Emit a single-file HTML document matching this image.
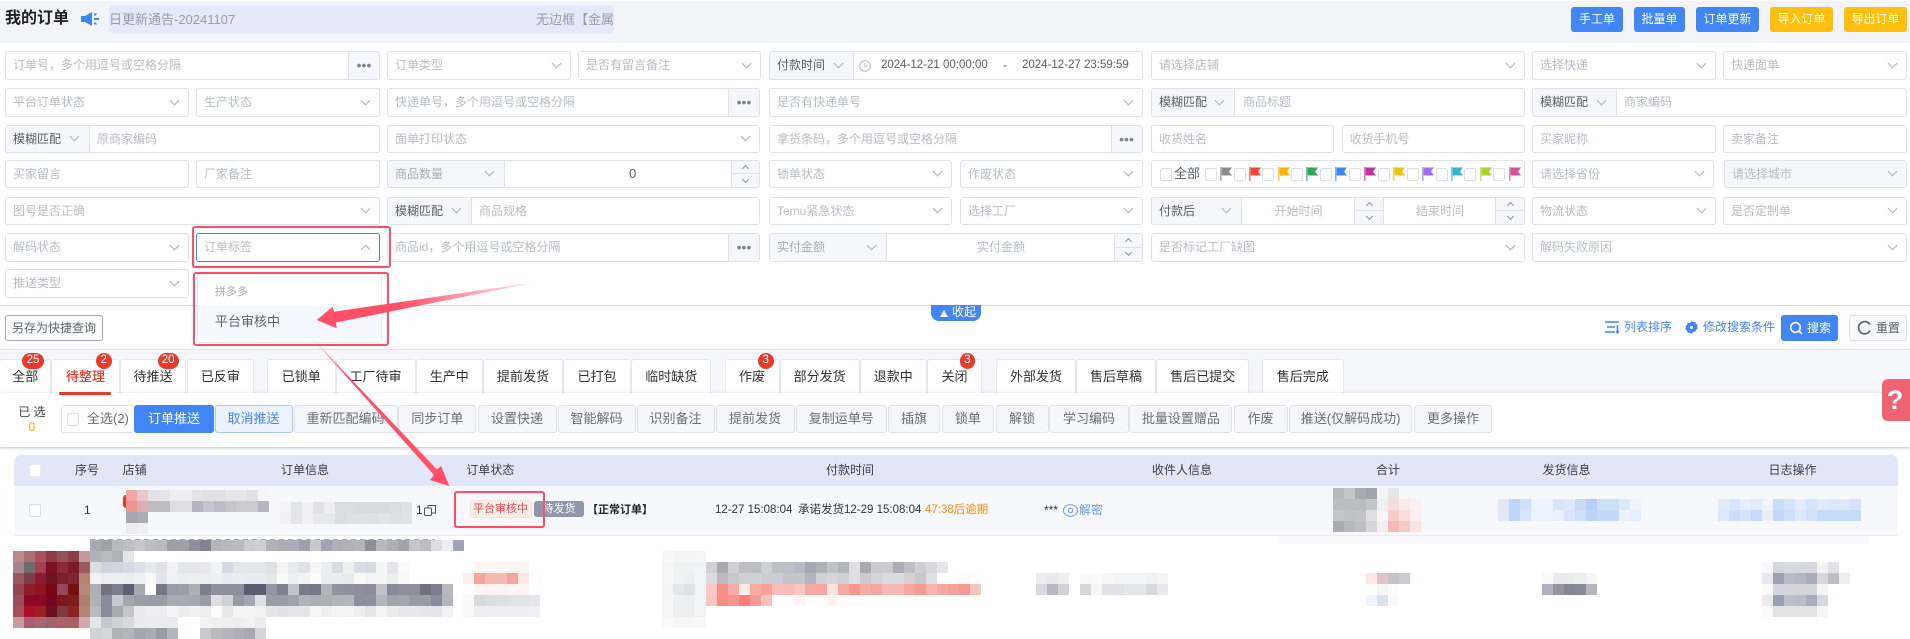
<!DOCTYPE html>
<html lang="zh-CN"><head><meta charset="utf-8"><title>我的订单</title>
<style>
*{box-sizing:border-box}
html,body{margin:0;padding:0;background:#fff}
body{position:relative;width:1910px;height:639px;overflow:hidden;font:12px/1.2 "Liberation Sans","Noto Sans CJK SC",sans-serif;color:#606266}
.a{position:absolute}
.btn{position:absolute;top:7px;height:25px;border-radius:3px;color:#fff;background:#4285f4;display:flex;align-items:center;justify-content:center;font-size:12px}
.y{background:#ffbf0a}
.f{position:absolute;border:1px solid #dfe2e8;border-radius:3px;background:#fff;color:#b9bcc3;padding-left:7px;display:flex;align-items:center;white-space:nowrap;overflow:hidden}
.r1{top:51px;height:29px}.r2{top:88px;height:29px}.r3{top:125px;height:28px}.r4{top:160px;height:28px}.r5{top:197px;height:28px}.r6{top:233px;height:29px}.r7{top:269px;height:29px}
.c0{left:5px;width:183.5px}.c1{left:196px;width:184px}.c2{left:387px;width:183.5px}.c3{left:578px;width:182.5px}.c4{left:769px;width:183px}.c5{left:960px;width:182.5px}.c6{left:1151px;width:182.5px}.c7{left:1341.5px;width:183.5px}.c8{left:1532px;width:183.5px}.c9{left:1723px;width:184px}
.d0{left:5px;width:375px}.d2{left:387px;width:373px}.d4{left:769px;width:373.5px}.d6{left:1151px;width:374px}.d8{left:1532px;width:375px}
.v,.u{position:absolute;width:7px;height:7px;right:10px;top:50%;margin-top:-6px;transform:rotate(45deg);border-right:1px solid #aeb1b8;border-bottom:1px solid #aeb1b8}
.u{transform:rotate(225deg);margin-top:-2px}
.dots{position:absolute;right:0;top:0;bottom:0;width:31px;background:#f5f7fc;border-left:1px solid #dfe2e8;color:#80838c;font-size:14px;display:flex;align-items:center;justify-content:center;letter-spacing:0}
.pre{position:absolute;left:0;top:0;bottom:0;background:#f5f7fa;border-right:1px solid #dfe2e8;padding-left:7px;display:flex;align-items:center}
.dk{color:#5a5d64}
.lt{color:#a9acb4}
.st{position:absolute;right:0;top:0;bottom:0;width:28px;background:#f5f7fa;border-left:1px solid #dfe2e8}
.st em{position:absolute;left:0;right:0;height:50%;display:block}
.st em:first-child{top:0;border-bottom:1px solid #dfe2e8}
.st em:last-child{bottom:0}
.st .v,.st .u{width:5px;height:5px;right:11px;border-color:#8d9097}
.st .u{margin-top:-1px}.st .v{margin-top:-4px}
.cen{position:absolute;display:flex;align-items:center;justify-content:center;top:0;bottom:0}
.cb{position:absolute;width:12px;height:13px;border:1px solid #dcdfe6;border-radius:2px;background:#fff}
.fl{position:absolute;top:167px;width:12px;height:14px}
.tab{position:absolute;top:359px;height:34px;padding-top:1px;background:#fff;border:1px solid #e6e8ee;border-bottom:0;border-radius:3px 3px 0 0;color:#303133;font-size:13px;display:flex;align-items:center;justify-content:center;white-space:nowrap}
.bd{position:absolute;top:353px;height:16px;background:#e8392d;color:#fff;border-radius:8px;font-size:11.5px;display:flex;align-items:center;justify-content:center;z-index:3}
.tb{position:absolute;top:405px;height:28px;background:#f6f7fa;border:1px solid #dfe2e8;border-radius:3px;color:#6a6d74;font-size:13px;display:flex;align-items:center;justify-content:center;white-space:nowrap}
.th{position:absolute;top:462px;color:#3a3d46;font-size:12px;line-height:16px;white-space:nowrap;transform:translateX(-50%)}
.td{position:absolute;top:503px;line-height:15px;color:#333;white-space:nowrap;font-size:12px}
.m{position:absolute;display:flex;height:11px}
.m b{flex:0 0 11px;height:11px;display:block}
.rb{position:absolute;border:2px solid #fb4f68;border-radius:3px;z-index:8}
</style></head><body>

<!-- header -->
<div class="a" style="left:0;top:1px;width:1910px;height:42px;background:#f3f4f8"></div>
<div class="a" style="left:5px;top:8px;font-size:16px;font-weight:700;color:#222;line-height:22px">我的订单</div>
<svg class="a" style="left:81px;top:12px" width="19" height="14" viewBox="0 0 19 14"><path fill="#4285f4" d="M0 4h4l7-4v14l-7-4H0z"/><path fill="#4285f4" d="M13 1.5h3l-1 2h-2zM13 6h5v2h-5zM13 10.500h2l1 2h-3z"/></svg>
<div class="a" style="left:109px;top:5px;width:505px;height:29px;background:#e4eaf8;border-radius:5px;overflow:hidden;white-space:nowrap;color:#9a9da5;font-size:13px;line-height:29px"><span class="a" style="left:0">日更新通告-20241107</span><span class="a" style="left:427px">无边框【金属配件】</span></div>
<div class="btn" style="left:1571px;width:52px">手工单</div>
<div class="btn" style="left:1634px;width:51px">批量单</div>
<div class="btn" style="left:1696px;width:63px">订单更新</div>
<div class="btn y" style="left:1770px;width:63px">导入订单</div>
<div class="btn y" style="left:1844px;width:63px">导出订单</div>

<!-- row 1 -->
<div class="f r1 d0">订单号，多个用逗号或空格分隔<span class="dots">•••</span></div>
<div class="f r1 c2">订单类型<i class="v"></i></div>
<div class="f r1 c3">是否有留言备注<i class="v"></i></div>
<div class="f r1 d4"><span class="pre dk" style="width:84px">付款时间<i class="v" style="right:11px"></i></span>
<svg class="a" style="left:89px;top:8px" width="12" height="12" viewBox="0 0 12 12" fill="none" stroke="#b5b8bf"><circle cx="6" cy="6" r="5.300"/><path d="M6 3v3.300h2.500"/></svg>
<span class="a" style="left:111px;color:#5a5d64;font-size:11.5px">2024-12-21 00:00:00</span><span class="a" style="left:233px;color:#5a5d64">-</span><span class="a" style="left:252px;color:#5a5d64;font-size:11.5px">2024-12-27 23:59:59</span></div>
<div class="f r1 d6">请选择店铺<i class="v"></i></div>
<div class="f r1 c8">选择快递<i class="v"></i></div>
<div class="f r1 c9">快递面单<i class="v"></i></div>

<!-- row 2 -->
<div class="f r2 c0">平台订单状态<i class="v"></i></div>
<div class="f r2 c1">生产状态<i class="v"></i></div>
<div class="f r2 d2">快递单号，多个用逗号或空格分隔<span class="dots">•••</span></div>
<div class="f r2 d4">是否有快递单号<i class="v"></i></div>
<div class="f r2 d6" style="padding-left:91px"><span class="pre dk" style="width:83px">模糊匹配<i class="v" style="right:11px"></i></span>商品标题</div>
<div class="f r2 d8" style="padding-left:91px"><span class="pre dk" style="width:84px">模糊匹配<i class="v" style="right:11px"></i></span>商家编码</div>

<!-- row 3 -->
<div class="f r3 d0" style="padding-left:91px"><span class="pre dk" style="width:84px">模糊匹配<i class="v" style="right:11px"></i></span>原商家编码</div>
<div class="f r3 d2">面单打印状态<i class="v"></i></div>
<div class="f r3 d4">拿货条码，多个用逗号或空格分隔<span class="dots">•••</span></div>
<div class="f r3 c6">收货姓名</div>
<div class="f r3 c7">收货手机号</div>
<div class="f r3 c8">买家昵称</div>
<div class="f r3 c9">卖家备注</div>

<!-- row 4 -->
<div class="f r4 c0">买家留言</div>
<div class="f r4 c1">厂家备注</div>
<div class="f r4 d2"><span class="pre lt" style="width:117px">商品数量<i class="v" style="right:11px"></i></span><span class="a dk" style="left:241px;font-size:13px">0</span><span class="st"><em><i class="u"></i></em><em><i class="v"></i></em></span></div>
<div class="f r4 c4">锁单状态<i class="v"></i></div>
<div class="f r4 c5">作废状态<i class="v"></i></div>
<div class="f r4 d6"></div>
<div class="f r4 c8" style="width:182px">请选择省份<i class="v"></i></div>
<div class="f r4 c9" style="left:1724px;width:183px;background:#f5f7fc">请选择城市<i class="v"></i></div>
<svg width="0" height="0" style="position:absolute"><symbol id="flag" viewBox="0 0 12 14"><path fill="currentColor" opacity=".65" d="M0 0h1.600v14H0z"/><path fill="currentColor" d="M1.600 .5H12L9 4.500l3 4H1.600z"/></symbol></svg>
<i class="cb" style="left:1160px;top:168px"></i><span class="a" style="left:1174px;top:166px;font-size:13px;line-height:16px;color:#5a5d64">全部</span>
<i class="cb" style="left:1204.500px;top:168px"></i><svg class="fl" style="left:1220px;color:#8c8c8c"><use href="#flag"/></svg>
<i class="cb" style="left:1233.500px;top:168px"></i><svg class="fl" style="left:1249px;color:#f44336"><use href="#flag"/></svg>
<i class="cb" style="left:1262px;top:168px"></i><svg class="fl" style="left:1277.500px;color:#ffb300"><use href="#flag"/></svg>
<i class="cb" style="left:1291px;top:168px"></i><svg class="fl" style="left:1306px;color:#2ea55a"><use href="#flag"/></svg>
<i class="cb" style="left:1320px;top:168px"></i><svg class="fl" style="left:1335px;color:#3f87f5"><use href="#flag"/></svg>
<i class="cb" style="left:1348.500px;top:168px"></i><svg class="fl" style="left:1364px;color:#c530a8"><use href="#flag"/></svg>
<i class="cb" style="left:1377.500px;top:168px"></i><svg class="fl" style="left:1393px;color:#f0c014"><use href="#flag"/></svg>
<i class="cb" style="left:1406.500px;top:168px"></i><svg class="fl" style="left:1422px;color:#9c6ff0"><use href="#flag"/></svg>
<i class="cb" style="left:1435.500px;top:168px"></i><svg class="fl" style="left:1451px;color:#35b5c8"><use href="#flag"/></svg>
<i class="cb" style="left:1464px;top:168px"></i><svg class="fl" style="left:1479.500px;color:#aad32b"><use href="#flag"/></svg>
<i class="cb" style="left:1493px;top:168px"></i><svg class="fl" style="left:1508.500px;color:#d9509a"><use href="#flag"/></svg>

<!-- row 5 -->
<div class="f r5 d0">图号是否正确<i class="v"></i></div>
<div class="f r5 d2" style="padding-left:91px"><span class="pre dk" style="width:84px">模糊匹配<i class="v" style="right:11px"></i></span>商品规格</div>
<div class="f r5 c4">Temu紧急状态<i class="v"></i></div>
<div class="f r5 c5">选择工厂<i class="v"></i></div>
<div class="f r5 d6"><span class="pre dk" style="width:90px">付款后<i class="v" style="right:11px"></i></span>
<span class="cen" style="left:90px;width:113px">开始时间</span><span class="st" style="left:202px;right:auto;width:29px"><em><i class="u"></i></em><em><i class="v"></i></em></span>
<span class="cen" style="left:231px;width:113px;border-left:1px solid #dfe2e8">结束时间</span><span class="st" style="width:29px"><em><i class="u"></i></em><em><i class="v"></i></em></span></div>
<div class="f r5 c8">物流状态<i class="v"></i></div>
<div class="f r5 c9">是否定制单<i class="v"></i></div>

<!-- row 6 -->
<div class="f r6 c0">解码状态<i class="v"></i></div>
<div class="f r6 c1" style="border-color:#4285f4">订单标签<i class="u"></i></div>
<div class="f r6 d2">商品id，多个用逗号或空格分隔<span class="dots">•••</span></div>
<div class="f r6 d4"><span class="pre lt" style="width:117px">实付金额<i class="v" style="right:11px"></i></span><span class="cen" style="left:117px;width:228px">实付金额</span><span class="st"><em><i class="u"></i></em><em><i class="v"></i></em></span></div>
<div class="f r6 d6">是否标记工厂缺图<i class="v"></i></div>
<div class="f r6 d8">解码失败原因<i class="v"></i></div>

<!-- row 7 -->
<div class="f r7 c0">推送类型<i class="v"></i></div>

<!-- divider -->
<div class="a" style="left:0;top:305px;width:1910px;height:1px;background:#dcdcdf"></div>
<div class="a" style="left:931px;top:305px;width:50px;height:16px;background:#4285f4;border-radius:0 0 8px 8px;color:#fff;font-size:12px;line-height:15px;white-space:nowrap"><span class="a" style="left:9px;top:5px;width:0;height:0;border:4px solid transparent;border-top:0;border-bottom:7px solid #fff"></span><span class="a" style="left:21px;top:0">收起</span></div>

<!-- action row -->
<div class="a" style="left:5px;top:315px;width:98px;height:26px;border:1px solid #a2a7b2;border-radius:3px;background:#fafbfc;color:#666;display:flex;align-items:center;justify-content:center;white-space:nowrap">另存为快捷查询</div>
<svg class="a" style="left:1605px;top:321px" width="15" height="13" viewBox="0 0 15 13" fill="none" stroke="#4285f4" stroke-width="1.500"><path d="M0 1h14M2 6h8M0 11h10M12.500 4v8"/><path d="M11 10l1.500 2.500L14 10" stroke-width="1"/></svg>
<span class="a" style="left:1624px;top:319px;color:#4a86ef;line-height:16px">列表排序</span>
<svg class="a" style="left:1685px;top:321px" width="13" height="13" viewBox="0 0 13 13"><path fill="#4285f4" fill-rule="evenodd" d="M6.500 0l1.700 1.100 2.100-.2.600 2 1.800 1-.6 2 .7 1.700-1.800 1.200-.6 2-2.100-.1L6.500 13l-1.700-1.300-2.100.1-.6-2L.4 8.600l.6-2-.6-1.700 1.800-1 .6-2 2.100.2zM6.500 5a1.500 1.500 0 100 3 1.500 1.500 0 000-3z"/></svg>
<span class="a" style="left:1703px;top:319px;color:#4a86ef;line-height:16px">修改搜索条件</span>
<div class="a" style="left:1781px;top:315px;width:57px;height:26px;background:#4285f4;border-radius:3px;color:#fff;line-height:26px"><svg class="a" style="left:8px;top:6px" width="14" height="14" viewBox="0 0 14 14" fill="none" stroke="#fff" stroke-width="1.600"><circle cx="6.500" cy="6.500" r="4.800"/><path d="M10 10l3 3"/></svg><span class="a" style="left:26px">搜索</span></div>
<div class="a" style="left:1849px;top:315px;width:58px;height:26px;background:#f8f9fb;border:1px solid #dfe2e8;border-radius:3px;color:#5a5d64;line-height:24px"><svg class="a" style="left:7px;top:4px" width="15" height="15" viewBox="0 0 15 15" fill="none" stroke="#666" stroke-width="1.700"><path d="M13 4.500A6 6 0 102.500 11 6 6 0 0013 10.500"/></svg><span class="a" style="left:26px">重置</span></div>

<!-- tabs band -->
<div class="a" style="left:0;top:349px;width:1910px;height:44px;background:#f5f6fa;border-top:1px solid #e4e6ec;box-shadow:0 -1px 2px rgba(0,0,0,.04)"></div>
<div class="tab" style="left:-1px;width:52.400px">全部</div>
<div class="tab" style="left:51.400px;width:68.200px;color:#e8392d;font-weight:500">待整理</div>
<div class="a" style="left:59px;top:392px;width:52.400px;height:3px;background:#e8392d;z-index:2;border-radius:1px"></div>
<div class="tab" style="left:119.600px;width:66.900px">待推送</div>
<div class="tab" style="left:186.500px;width:67.800px">已反审</div>
<div class="tab" style="left:267px;width:68.500px">已锁单</div>
<div class="tab" style="left:335.500px;width:80px">工厂待审</div>
<div class="tab" style="left:415.500px;width:67.500px">生产中</div>
<div class="tab" style="left:483px;width:80px">提前发货</div>
<div class="tab" style="left:563px;width:68px">已打包</div>
<div class="tab" style="left:631px;width:80.400px">临时缺货</div>
<div class="tab" style="left:724.500px;width:55.100px">作废</div>
<div class="tab" style="left:779.600px;width:80px">部分发货</div>
<div class="tab" style="left:859.600px;width:67.400px">退款中</div>
<div class="tab" style="left:927px;width:55px">关闭</div>
<div class="tab" style="left:996px;width:80px">外部发货</div>
<div class="tab" style="left:1076px;width:80px">售后草稿</div>
<div class="tab" style="left:1156px;width:93.400px">售后已提交</div>
<div class="tab" style="left:1262px;width:81.500px">售后完成</div>
<div class="bd" style="left:22.400px;width:21.300px">25</div>
<div class="bd" style="left:96px;width:15.500px">2</div>
<div class="bd" style="left:157.500px;width:21.300px">20</div>
<div class="bd" style="left:758px;width:15.500px">3</div>
<div class="bd" style="left:959.600px;width:15.500px">3</div>

<!-- toolbar -->
<div class="a" style="left:0;top:393px;width:1910px;height:54px;background:#fff;box-shadow:0 1px 3px rgba(40,45,70,.3)"></div>
<div class="a" style="left:0;top:404px;width:64px;text-align:center;line-height:16px;color:#444">已 选</div>
<div class="a" style="left:0;top:419px;width:64px;text-align:center;line-height:16px;color:#f5a623">0</div>
<div class="tb" style="left:61px;width:74px;background:#fff;justify-content:flex-start;padding-left:25px">全选(2)</div>
<i class="cb" style="left:67px;top:413px"></i>
<div class="tb" style="left:134px;width:80px;background:#4285f4;color:#fff;border-color:#4285f4">订单推送</div>
<div class="tb" style="left:214.500px;width:78px;background:#ecf3ff;color:#4285f4;border-color:#a8c8fb">取消推送</div>
<div class="tb" style="left:293.500px;width:104px">重新匹配编码</div>
<div class="tb" style="left:398.400px;width:78px">同步订单</div>
<div class="tb" style="left:477.500px;width:79px">设置快递</div>
<div class="tb" style="left:557.500px;width:78px">智能解码</div>
<div class="tb" style="left:636.500px;width:78px">识别备注</div>
<div class="tb" style="left:715.500px;width:79px">提前发货</div>
<div class="tb" style="left:795.500px;width:91.500px">复制运单号</div>
<div class="tb" style="left:887.800px;width:52.600px">插旗</div>
<div class="tb" style="left:941.600px;width:52.700px">锁单</div>
<div class="tb" style="left:995.500px;width:53px">解锁</div>
<div class="tb" style="left:1049.400px;width:79.200px">学习编码</div>
<div class="tb" style="left:1129.400px;width:103px">批量设置赠品</div>
<div class="tb" style="left:1233.500px;width:54px">作废</div>
<div class="tb" style="left:1288.800px;width:123.600px">推送(仅解码成功)</div>
<div class="tb" style="left:1413.700px;width:78.700px">更多操作</div>
<div class="a" style="left:1882px;top:379px;width:28px;height:42px;background:#f06375;border-radius:6px 0 0 6px;color:#fff;font-size:27px;font-weight:700;line-height:42px;text-align:center;padding-right:2px">?</div>

<!-- table -->
<div class="a" style="left:14px;top:455px;width:1884px;height:31px;background:#e1e7f6;border-radius:7px 7px 0 0"></div>
<div class="a" style="left:14px;top:486px;width:1884px;height:50px;background:#f7f8fb;border-bottom:1px solid #eaecf2"></div>
<i class="cb" style="left:28.500px;top:464px;border-color:#e8eaf0"></i>
<span class="th" style="left:87px">序号</span><span class="th" style="left:134.700px">店铺</span><span class="th" style="left:305px">订单信息</span><span class="th" style="left:490.300px">订单状态</span><span class="th" style="left:850px">付款时间</span><span class="th" style="left:1182px">收件人信息</span><span class="th" style="left:1388px">合计</span><span class="th" style="left:1566.500px">发货信息</span><span class="th" style="left:1792.500px">日志操作</span>
<i class="cb" style="left:28.500px;top:504px"></i>
<span class="td" style="left:84px">1</span>
<div class="a" style="left:123px;top:495px;width:8px;height:13px;background:#e8392d;border-radius:3px 0 0 3px"></div>
<span class="td" style="left:416px">1</span>
<svg class="a" style="left:424px;top:505px" width="12" height="11" viewBox="0 0 12 11" fill="none" stroke="#555"><rect x=".5" y="3" width="7" height="7.500" rx="1"/><path d="M4 3V.5h7.500V8H8"/></svg>
<div class="a" style="left:469.500px;top:500px;width:62px;height:18px;background:#ffecec;border:1px solid #fdd;border-radius:3px;color:#f2453d;font-size:11px;line-height:16px;text-align:center;white-space:nowrap">平台审核中</div>
<div class="a" style="left:534px;top:501px;width:50px;height:16px;background:#8f96a8;border-radius:3px;color:#fff;font-size:11px;line-height:16px;text-align:center">待发货</div>
<span class="td" style="left:587px;font-weight:700;color:#222;font-size:11px">【正常订单】</span>
<span class="td" style="left:715px;font-size:11.500px">12-27 15:08:04</span>
<span class="td" style="left:798px;font-size:11.500px">承诺发货12-29 15:08:04</span>
<span class="td" style="left:925px;color:#fa8c16;font-size:11.500px">47:38后逾期</span>
<span class="td" style="left:1044px">***</span>
<svg class="a" style="left:1063px;top:504px" width="15" height="13" viewBox="0 0 15 13" fill="none" stroke="#5b9bff"><ellipse cx="7.500" cy="6.500" rx="7" ry="5.800"/><circle cx="7.500" cy="6.500" r="2.200"/></svg>
<span class="td" style="left:1079px;color:#5b9bff">解密</span>

<!-- row mosaics -->
<div class="m" style="left:126px;top:490px"><b style="background:#f4a6a2"></b><b style="background:#e8c7c8"></b><b style="background:#e3e3e8"></b><b style="background:#e5e5ea"></b><b style="background:#eeeef2"></b><b style="background:#eeeef2"></b><b style="background:#e4e4e9"></b><b style="background:#e0e0e5"></b><b style="background:#e0e0e5"></b><b style="background:#e5e5ea"></b><b style="background:#e5e5ea"></b><b style="background:#e0e0e5"></b><b style="background:#f6f6f8"></b></div>
<div class="m" style="left:126px;top:501px"><b style="background:#f19390"></b><b style="background:#dfaeb0"></b><b style="background:#bcbdc5"></b><b style="background:#bcbdc5"></b><b style="background:#dddde2"></b><b style="background:#dddde2"></b><b style="background:#b4b5bf"></b><b style="background:#c3c4cc"></b><b style="background:#bbbcc5"></b><b style="background:#c3c4cc"></b><b style="background:#cbccd2"></b><b style="background:#cbccd2"></b><b style="background:#b5b6bf"></b></div>
<div class="m" style="left:126px;top:512px"><b style="background:#a6a8b0"></b><b style="background:#abacb4"></b></div>
<div class="m" style="left:126px;top:523px"><b style="background:#ecedef"></b><b style="background:#eef0f2"></b></div>
<div class="m" style="left:280px;top:502px"><b style="background:#f3f3f6"></b><b style="background:#e4e5e9"></b><b style="background:#f0f0f3"></b><b style="background:#e0e1e6"></b><b style="background:#eeeef2"></b><b style="background:#dcdde3"></b><b style="background:#dcdde3"></b><b style="background:#dadbe1"></b><b style="background:#dadbe1"></b><b style="background:#dadbe1"></b><b style="background:#dcdde3"></b><b style="background:#e0e1e6"></b></div>
<div class="m" style="left:280px;top:513px"><b style="background:#f1f1f4"></b><b style="background:#e4e5e9"></b><b style="background:#f1f1f4"></b><b style="background:#e8e9ec"></b><b style="background:#e8e9ec"></b><b style="background:#dcdde3"></b><b style="background:#dfe0e5"></b><b style="background:#e0e1e6"></b><b style="background:#dfe0e5"></b><b style="background:#e2e3e8"></b><b style="background:#dfe0e5"></b><b style="background:#e2e3e8"></b></div>

<div class="m" style="left:1333px;top:488px"><b style="background:#b8b9bf"></b><b style="background:#c5c6c9"></b><b style="background:#a9aab2"></b><b style="background:#a2a3ab"></b><b style="background:#f5f5f7"></b><b style="background:#e4e5e8"></b></div>
<div class="m" style="left:1333px;top:499px"><b style="background:#bcbdc2"></b><b style="background:#bcbdc2"></b><b style="background:#bbbcc1"></b><b style="background:#c4c5ca"></b><b style="background:#f0f0f2"></b><b style="background:#f2dedd"></b><b style="background:#f8ebe9"></b><b style="background:#faf0f0"></b></div>
<div class="m" style="left:1333px;top:510px"><b style="background:#c5c6c9"></b><b style="background:#c0c1c5"></b><b style="background:#c2c3c6"></b><b style="background:#dedee0"></b><b style="background:#f5f5f6"></b><b style="background:#f6cdcc"></b><b style="background:#f8dfdd"></b><b style="background:#faeff0"></b></div>
<div class="m" style="left:1333px;top:521px"><b style="background:#aaabb3"></b><b style="background:#b8b9be"></b><b style="background:#bfc0c4"></b><b style="background:#d5d6d9"></b><b style="background:#f3eff0"></b><b style="background:#f4b8b6"></b><b style="background:#f6cac9"></b><b style="background:#f7e4e3"></b></div>

<div class="m" style="left:1498px;top:499px"><b style="background:#e0e8f8"></b><b style="background:#c0d6f8"></b><b style="background:#d0e0fa"></b><b style="background:#edf3fc"></b><b style="background:#edf3fc"></b><b style="background:#d8e5fb"></b><b style="background:#dfe9fb"></b><b style="background:#c8d9f8"></b><b style="background:#b8d0f8"></b><b style="background:#cfdffa"></b><b style="background:#cfdffa"></b><b style="background:#dfe9fb"></b><b style="background:#edf2fb"></b></div>
<div class="m" style="left:1498px;top:510px"><b style="background:#e0e9f8"></b><b style="background:#c0d6f8"></b><b style="background:#d8e4fb"></b><b style="background:#edf3fc"></b><b style="background:#edf3fc"></b><b style="background:#eaf1fc"></b><b style="background:#d8e4fb"></b><b style="background:#cedffa"></b><b style="background:#bdd4f9"></b><b style="background:#c3d8fa"></b><b style="background:#c3d8fa"></b><b style="background:#ecf2fc"></b><b style="background:#e7eefb"></b></div>
<div class="m" style="left:1718px;top:499px"><b style="background:#e3ebf9"></b><b style="background:#d8e5fb"></b><b style="background:#e8eefb"></b><b style="background:#e3ebf9"></b><b style="background:#f2f5fb"></b><b style="background:#cbddfa"></b><b style="background:#d5e3fb"></b><b style="background:#e4ebf9"></b><b style="background:#d5e3fb"></b><b style="background:#e2eafa"></b><b style="background:#dde7fa"></b><b style="background:#dde7fa"></b><b style="background:#d6e3fa"></b></div>
<div class="m" style="left:1718px;top:510px"><b style="background:#dfe8f8"></b><b style="background:#ccddf9"></b><b style="background:#d6e3fa"></b><b style="background:#c8dafa"></b><b style="background:#e8eefb"></b><b style="background:#c4d9fa"></b><b style="background:#cfdffa"></b><b style="background:#dfe8f9"></b><b style="background:#d3e1fa"></b><b style="background:#c8dafa"></b><b style="background:#c8dafa"></b><b style="background:#c8dafa"></b><b style="background:#c8dafa"></b></div>
<div class="a" style="left:1279px;top:536px;width:591px;height:8px;background:#fafafc"></div>

<!-- second row mosaics: image -->
<div class="m" style="left:13px;top:551px"><b style="background:#bb8a90"></b><b style="background:#a87076"></b><b style="background:#ac4f5f"></b><b style="background:#8f3a49"></b><b style="background:#94505b"></b><b style="background:#8a3d49"></b><b style="background:#c39aa0"></b></div>
<div class="m" style="left:13px;top:562px"><b style="background:#a6868a"></b><b style="background:#6f6b6b"></b><b style="background:#a33f4f"></b><b style="background:#7d0f22"></b><b style="background:#8c2a36"></b><b style="background:#7b1a28"></b><b style="background:#9b5a62"></b></div>
<div class="m" style="left:13px;top:573px"><b style="background:#9a5863"></b><b style="background:#7d3d49"></b><b style="background:#861d31"></b><b style="background:#6e1320"></b><b style="background:#7e1f2c"></b><b style="background:#7f2530"></b><b style="background:#b5836f"></b></div>
<div class="m" style="left:13px;top:584px"><b style="background:#964450"></b><b style="background:#8e1c2a"></b><b style="background:#8d1524"></b><b style="background:#760714"></b><b style="background:#954755"></b><b style="background:#780d12"></b><b style="background:#b58a78"></b></div>
<div class="m" style="left:13px;top:595px"><b style="background:#a04a5a"></b><b style="background:#8c0a26"></b><b style="background:#8a0a24"></b><b style="background:#72061a"></b><b style="background:#7a1820"></b><b style="background:#821c1c"></b><b style="background:#b0806f"></b></div>
<div class="m" style="left:13px;top:606px"><b style="background:#a84c5a"></b><b style="background:#ab0f2c"></b><b style="background:#982025"></b><b style="background:#6a1020"></b><b style="background:#7e3840"></b><b style="background:#8c2525"></b><b style="background:#b08575"></b></div>
<div class="m" style="left:13px;top:617px"><b style="background:#c79aa0"></b><b style="background:#a86070"></b><b style="background:#a86872"></b><b style="background:#a06470"></b><b style="background:#ae6068"></b><b style="background:#aa6068"></b><b style="background:#cfa8b0"></b></div>

<!-- second row mosaics: title -->
<div class="a" style="left:90px;top:539px;width:345px;height:1px;background:repeating-linear-gradient(90deg,#a8a9b0 0 5px,#eee 5px 9px)"></div>
<div class="m" style="left:90px;top:540px"><b style="background:#a8a9b0"></b><b style="background:#a0a1a9"></b><b style="background:#b9bac0"></b><b style="background:#bfc0c5"></b><b style="background:#c5c6ca"></b><b style="background:#bcbdc2"></b><b style="background:#b8b9bf"></b><b style="background:#9f9fa9"></b><b style="background:#9fa0a9"></b><b style="background:#8f8f9b"></b><b style="background:#83848f"></b><b style="background:#b5b6bd"></b><b style="background:#b8b9bf"></b><b style="background:#babbc1"></b><b style="background:#cbccd1"></b><b style="background:#cfd0d5"></b><b style="background:#b0b1ba"></b><b style="background:#abacb6"></b><b style="background:#abacb6"></b><b style="background:#9e9fab"></b><b style="background:#c6c7cb"></b><b style="background:#a2a3ae"></b><b style="background:#adaeb7"></b><b style="background:#b1b2b9"></b><b style="background:#b4b5bb"></b><b style="background:#8e8f9b"></b><b style="background:#b8b9bf"></b><b style="background:#aeafb7"></b><b style="background:#a3a4ad"></b><b style="background:#c5c6cc"></b><b style="background:#bdbec3"></b><b style="background:#dedee2"></b><b style="background:#eeeef0"></b><b style="background:#a0a5b5"></b></div>
<div class="m" style="left:90px;top:551px"><b style="background:#b0b1b9"></b><b style="background:#b9bac0"></b><b style="background:#b0b1b8"></b><b style="background:#e5e5e7"></b></div>
<div class="m" style="left:90px;top:562px"><b style="background:#dddee0"></b><b style="background:#cfd3dc"></b><b style="background:#d2d5dd"></b><b style="background:#d8dae2"></b><b style="background:#dde0e5"></b><b style="background:#e8e9ed"></b><b style="background:#e2e3e8"></b><b style="background:#f2f2f4"></b><b style="background:#e5e6ea"></b><b style="background:#e4e5e9"></b><b style="background:#e8e9ed"></b><b style="background:#f2f3f5"></b><b style="background:#d6d9e2"></b><b style="background:#e5e6ea"></b><b style="background:#e4e5ea"></b><b style="background:#e4e5e8"></b><b style="background:#dfe0e4"></b><b style="background:#f5f5f6"></b><b style="background:#e8e9ec"></b><b style="background:#e0e2e7"></b><b style="background:#f5f5f6"></b><b style="background:#ecedf0"></b><b style="background:#d8dbe2"></b><b style="background:#eeeff1"></b><b style="background:#dcdee5"></b><b style="background:#d8dae2"></b><b style="background:#f6f6f7"></b><b style="background:#e4e5e8"></b><b style="background:#fafafa"></b></div>
<div class="m" style="left:90px;top:573px"><b style="background:#f2f2f3"></b><b style="background:#eeeef0"></b><b style="background:#edeef0"></b><b style="background:#ecedef"></b><b style="background:#f0f0f2"></b><b style="background:#f8f8f8"></b><b style="background:#e4e5e8"></b><b style="background:#f1f1f3"></b><b style="background:#ecedef"></b><b style="background:#eeeef0"></b><b style="background:#ecedef"></b><b style="background:#eeeff1"></b><b style="background:#eaebee"></b><b style="background:#ededf0"></b><b style="background:#eaebef"></b><b style="background:#eaebee"></b><b style="background:#e6e7ea"></b><b style="background:#fafafa"></b><b style="background:#eeeff1"></b><b style="background:#f4f4f5"></b><b style="background:#fbfbfb"></b><b style="background:#ecedf0"></b><b style="background:#ebecef"></b><b style="background:#e9eaee"></b><b style="background:#f8f8f8"></b><b style="background:#f4f4f6"></b><b style="background:#f5f5f6"></b><b style="background:#ecedef"></b><b style="background:#f9f9fa"></b></div>
<div class="m" style="left:90px;top:584px"><b style="background:#aeb0b7"></b><b style="background:#72737f"></b><b style="background:#7d7e8a"></b><b style="background:#5f6172"></b><b style="background:#a8a9b0"></b><b style="background:#ffffff"></b><b style="background:#767785"></b><b style="background:#9a9ba5"></b><b style="background:#9c9da7"></b><b style="background:#aeafb5"></b><b style="background:#7d7e8b"></b><b style="background:#8f909b"></b><b style="background:#8f909b"></b><b style="background:#8f909b"></b><b style="background:#5b5d70"></b><b style="background:#5b5d70"></b><b style="background:#9496a1"></b><b style="background:#80818e"></b><b style="background:#c2c3c9"></b><b style="background:#7a7b88"></b><b style="background:#787986"></b><b style="background:#b3b4ba"></b><b style="background:#9293a0"></b><b style="background:#90919c"></b><b style="background:#8e8f9a"></b><b style="background:#8c8d99"></b><b style="background:#c0c1c6"></b><b style="background:#8a8b98"></b><b style="background:#8e8f9a"></b><b style="background:#8e8f9a"></b><b style="background:#70717f"></b><b style="background:#7c7d8a"></b><b style="background:#b8b9be"></b></div>
<div class="m" style="left:90px;top:595px"><b style="background:#b0b1b6"></b><b style="background:#8a8b96"></b><b style="background:#c8c9ce"></b><b style="background:#a6a7ad"></b><b style="background:#9c9da5"></b><b style="background:#9c9da6"></b><b style="background:#9b9ca5"></b><b style="background:#a9aab2"></b><b style="background:#a9aab2"></b><b style="background:#a8a9b0"></b><b style="background:#9a9ba4"></b><b style="background:#dfdfe2"></b><b style="background:#d0d1d5"></b><b style="background:#9a9ba5"></b><b style="background:#a5a6af"></b><b style="background:#e0e0e4"></b><b style="background:#9b9ca6"></b><b style="background:#9b9ca6"></b><b style="background:#a0a1a9"></b><b style="background:#b3b4b9"></b><b style="background:#adaeb5"></b><b style="background:#afb0b5"></b><b style="background:#b3b4ba"></b><b style="background:#b5b6bb"></b><b style="background:#8e8f9a"></b><b style="background:#90919c"></b><b style="background:#b5b6bb"></b><b style="background:#a4a5ad"></b><b style="background:#a5a6ae"></b><b style="background:#9a9ba4"></b><b style="background:#9a9ba4"></b><b style="background:#8b8c99"></b><b style="background:#b5b6bb"></b></div>
<div class="m" style="left:90px;top:606px"><b style="background:#b9bac0"></b><b style="background:#8a8b98"></b><b style="background:#a8a9b1"></b><b style="background:#c5c6ca"></b><b style="background:#ebebed"></b><b style="background:#eeeef0"></b><b style="background:#edeef0"></b><b style="background:#f4f4f5"></b><b style="background:#eeeef0"></b><b style="background:#f1f1f3"></b><b style="background:#ecedef"></b><b style="background:#fbfbfb"></b><b style="background:#e7e8ea"></b><b style="background:#f4f4f5"></b><b style="background:#f4f4f5"></b><b style="background:#f2f2f3"></b><b style="background:#e4e5e8"></b><b style="background:#e1e2e5"></b><b style="background:#e4e5e8"></b><b style="background:#e4e5e8"></b><b style="background:#f6f6f7"></b><b style="background:#eeeff1"></b><b style="background:#f5f5f6"></b><b style="background:#f4f4f5"></b><b style="background:#eeeff1"></b><b style="background:#e4e5e8"></b><b style="background:#f5f5f6"></b><b style="background:#ebecee"></b><b style="background:#e6e7ea"></b><b style="background:#e8e9ec"></b><b style="background:#e6e7ea"></b><b style="background:#e4e5e8"></b><b style="background:#f2f2f3"></b></div>
<div class="m" style="left:90px;top:617px"><b style="background:#e4e5e7"></b><b style="background:#c8c9ce"></b><b style="background:#d0d1d5"></b><b style="background:#d8d9dc"></b><b style="background:#ebebed"></b><b style="background:#ecedee"></b><b style="background:#ebecee"></b><b style="background:#ebecef"></b><b style="background:#ffffff"></b><b style="background:#ffffff"></b><b style="background:#f2f2f3"></b><b style="background:#f0f0f1"></b><b style="background:#eeeef0"></b><b style="background:#eeeef0"></b><b style="background:#f2f2f3"></b><b style="background:#ecedef"></b></div>
<div class="m" style="left:90px;top:628px"><b style="background:#d1d2d6"></b><b style="background:#d6d7da"></b><b style="background:#b0b1b9"></b><b style="background:#b5b6bd"></b><b style="background:#a5a6ae"></b><b style="background:#a9aab2"></b><b style="background:#9a9ba5"></b><b style="background:#b5b6bb"></b><b style="background:#ffffff"></b><b style="background:#ffffff"></b><b style="background:#c8c9ce"></b><b style="background:#b9bac0"></b><b style="background:#b5b6bd"></b><b style="background:#b0b1b8"></b><b style="background:#a8a9b1"></b><b style="background:#d4d5d8"></b></div>

<!-- second row: status -->
<div class="m" style="left:474px;top:562px"><b style="background:#fdf5f4"></b><b style="background:#fdf5f4"></b><b style="background:#fdf3f2"></b><b style="background:#fdf3f2"></b><b style="background:#fdf5f4"></b></div>
<div class="m" style="left:463px;top:573px"><b style="background:#fdf0ee"></b><b style="background:#f4a5a0"></b><b style="background:#f6b8b0"></b><b style="background:#f6bab4"></b><b style="background:#f4a5a0"></b><b style="background:#fbe8e6"></b></div>
<div class="m" style="left:474px;top:584px"><b style="background:#fdf5f4"></b><b style="background:#fdf3f2"></b><b style="background:#fdf3f2"></b><b style="background:#fdf5f4"></b><b style="background:#fdf5f4"></b></div>
<div class="m" style="left:463px;top:595px"><b style="background:#fafafa"></b><b style="background:#d9dadf"></b><b style="background:#dcdde1"></b><b style="background:#e0e1e5"></b><b style="background:#e2e3e7"></b><b style="background:#e2e3e7"></b><b style="background:#e5e6e9"></b></div>
<div class="m" style="left:463px;top:606px"><b style="background:#fafafa"></b><b style="background:#eceef2"></b><b style="background:#edeff3"></b><b style="background:#eeeff3"></b><b style="background:#eeeff3"></b><b style="background:#eeeff3"></b><b style="background:#f0f1f4"></b></div>

<!-- second row: times -->
<div class="m" style="left:662px;top:551px"><b style="background:#f8f8f9"></b><b style="background:#f5f5f6"></b><b style="background:#f5f5f6"></b><b style="background:#f6f6f7"></b></div>
<div class="m" style="left:662px;top:562px"><b style="background:#f6f6f7"></b><b style="background:#f0f1f2"></b><b style="background:#f0f1f2"></b><b style="background:#f2f3f4"></b></div>
<div class="m" style="left:662px;top:573px"><b style="background:#f6f6f7"></b><b style="background:#f0f1f2"></b><b style="background:#eeeff0"></b><b style="background:#f2f3f4"></b></div>
<div class="m" style="left:662px;top:584px"><b style="background:#f4f5f6"></b><b style="background:#e4e6e9"></b><b style="background:#e0e2e6"></b><b style="background:#f2f3f4"></b></div>
<div class="m" style="left:662px;top:595px"><b style="background:#f6f6f7"></b><b style="background:#eff0f1"></b><b style="background:#eeeff0"></b><b style="background:#f2f3f4"></b></div>
<div class="m" style="left:662px;top:606px"><b style="background:#f6f6f7"></b><b style="background:#eff0f1"></b><b style="background:#eeeff0"></b><b style="background:#f2f3f4"></b></div>
<div class="m" style="left:662px;top:617px"><b style="background:#fafafa"></b><b style="background:#f6f6f7"></b><b style="background:#f6f6f7"></b><b style="background:#f8f8f9"></b></div>
<div class="m" style="left:706px;top:562px"><b style="background:#d0d1d5"></b><b style="background:#a8a9b3"></b><b style="background:#cfd0d5"></b><b style="background:#bdbec6"></b><b style="background:#bdbec5"></b><b style="background:#ced0d4"></b><b style="background:#bfc0c7"></b><b style="background:#bfc0c7"></b><b style="background:#b8b9c2"></b><b style="background:#a6a7b1"></b><b style="background:#b0b1b9"></b><b style="background:#c1c2c8"></b><b style="background:#b3b4bc"></b><b style="background:#e0e0e3"></b><b style="background:#a7a8b2"></b><b style="background:#cbccd1"></b><b style="background:#cbccd1"></b><b style="background:#acadb8"></b><b style="background:#bfc0c7"></b><b style="background:#cecfd5"></b><b style="background:#d8d9dd"></b><b style="background:#e6e6e9"></b></div>
<div class="m" style="left:706px;top:573px"><b style="background:#dcdcdf"></b><b style="background:#bcb9c0"></b><b style="background:#cbc8cd"></b><b style="background:#cfd0d5"></b><b style="background:#d0d1d5"></b><b style="background:#cccdd2"></b><b style="background:#cccdd2"></b><b style="background:#c4c5cb"></b><b style="background:#c4c5cb"></b><b style="background:#b5b6bd"></b><b style="background:#cfd0d5"></b><b style="background:#d5d5da"></b><b style="background:#cfd0d5"></b><b style="background:#e0e0e3"></b><b style="background:#cccacf"></b><b style="background:#d5d5da"></b><b style="background:#dcdce0"></b><b style="background:#dcdce0"></b><b style="background:#d8cfd2"></b><b style="background:#cbc8cd"></b><b style="background:#dddfe3"></b><b style="background:#ffffff"></b><b style="background:#fffefe"></b><b style="background:#fff9f8"></b><b style="background:#fffdfc"></b></div>
<div class="m" style="left:706px;top:584px"><b style="background:#fac8c6"></b><b style="background:#f48f88"></b><b style="background:#f8aca8"></b><b style="background:#fdeae6"></b><b style="background:#f8aaa6"></b><b style="background:#f8a09c"></b><b style="background:#fabcb8"></b><b style="background:#fabab6"></b><b style="background:#fbc6c2"></b><b style="background:#f8a8a4"></b><b style="background:#f8a4a0"></b><b style="background:#fde4e0"></b><b style="background:#f8a8a4"></b><b style="background:#f59690"></b><b style="background:#f8aca8"></b><b style="background:#f8a4a0"></b><b style="background:#f9b8b6"></b><b style="background:#f9b8b6"></b><b style="background:#f8a4a0"></b><b style="background:#f69a96"></b><b style="background:#f9b4b0"></b><b style="background:#f8a8a4"></b><b style="background:#f8a09c"></b><b style="background:#f69a96"></b><b style="background:#f9c4c0"></b></div>
<div class="m" style="left:706px;top:595px"><b style="background:#fac4c2"></b><b style="background:#f48f88"></b><b style="background:#f59490"></b><b style="background:#f28078"></b><b style="background:#f69a96"></b><b style="background:#fac0bc"></b><b style="background:#ffffff"></b><b style="background:#ffffff"></b><b style="background:#fff6f4"></b><b style="background:#fffdfc"></b><b style="background:#fffefe"></b><b style="background:#fff4f2"></b></div>

<!-- second row: receiver -->
<div class="m" style="left:1036px;top:573px"><b style="background:#ececee"></b><b style="background:#e8e9ea"></b><b style="background:#edeeef"></b><b style="background:#ffffff"></b><b style="background:#f9f9fa"></b><b style="background:#fbfbfc"></b><b style="background:#f7f7f8"></b><b style="background:#f4f4f5"></b><b style="background:#f2f3f4"></b><b style="background:#f2f3f4"></b><b style="background:#f0f1f2"></b><b style="background:#f5f5f6"></b></div>
<div class="m" style="left:1036px;top:584px"><b style="background:#d9dadf"></b><b style="background:#b8b9c0"></b><b style="background:#d2d3d8"></b><b style="background:#ffffff"></b><b style="background:#d6d7d8"></b><b style="background:#f5f6f6"></b><b style="background:#e0e1e6"></b><b style="background:#e0e1e5"></b><b style="background:#e4e5e8"></b><b style="background:#e4e5e8"></b><b style="background:#d9dadf"></b><b style="background:#e8e9ec"></b></div>

<!-- second row: total / shipping / log -->
<div class="m" style="left:1366px;top:573px"><b style="background:#fde6e6"></b><b style="background:#dfc5c8"></b><b style="background:#c4c5cb"></b><b style="background:#cbccd1"></b></div>
<div class="m" style="left:1377px;top:584px"><b style="background:#f5f5f5"></b><b style="background:#fcfcfc"></b></div>
<div class="m" style="left:1366px;top:595px"><b style="background:#eff5fc"></b><b style="background:#dde3ec"></b><b style="background:#fafafa"></b></div>
<div class="m" style="left:1542px;top:573px"><b style="background:#fafafa"></b><b style="background:#ebebed"></b><b style="background:#ebebed"></b><b style="background:#eeeef0"></b><b style="background:#f6f6f7"></b></div>
<div class="m" style="left:1542px;top:584px"><b style="background:#b0b1ba"></b><b style="background:#94959f"></b><b style="background:#858693"></b><b style="background:#888994"></b><b style="background:#b5b6bc"></b></div>
<div class="m" style="left:1762px;top:562px"><b style="background:#f8f8f9"></b><b style="background:#d5d7dc"></b><b style="background:#d8d9de"></b><b style="background:#d8d9de"></b><b style="background:#d7d8dd"></b><b style="background:#f3f3f4"></b><b style="background:#e2e2e5"></b></div>
<div class="m" style="left:1762px;top:573px"><b style="background:#e9e9ed"></b><b style="background:#9aa1b0"></b><b style="background:#b9bcc6"></b><b style="background:#b2b6c1"></b><b style="background:#a7adbb"></b><b style="background:#d7d7dd"></b><b style="background:#bfbec4"></b><b style="background:#ededee"></b></div>
<div class="m" style="left:1762px;top:584px"><b style="background:#fafafb"></b><b style="background:#d3d5da"></b><b style="background:#d3d5da"></b><b style="background:#d3d5da"></b><b style="background:#d3d5da"></b><b style="background:#f4f4f5"></b></div>
<div class="m" style="left:1762px;top:595px"><b style="background:#e9e9ed"></b><b style="background:#99a0ae"></b><b style="background:#bcbfc8"></b><b style="background:#babdc6"></b><b style="background:#a9aeba"></b><b style="background:#d8d9de"></b></div>
<div class="m" style="left:1762px;top:606px"><b style="background:#fafafb"></b><b style="background:#e3e3e5"></b><b style="background:#e3e3e5"></b><b style="background:#e3e3e5"></b><b style="background:#e3e3e5"></b><b style="background:#f6f6f7"></b></div>

<!-- dropdown -->
<div class="a" style="left:197px;top:273px;width:185px;height:70px;background:#fff;border:1px solid #e8eaef;border-radius:3px;z-index:5;overflow:hidden">
<div class="a" style="left:17px;top:11px;font-size:11px;line-height:14px;color:#a6a9b0;white-space:nowrap">拼多多</div>
<div class="a" style="left:0;top:32px;width:185px;height:32px;background:#f4f7fd;font-size:13px;line-height:31px;color:#606266;padding-left:17px;white-space:nowrap">平台审核中</div>
</div>

<!-- annotations -->
<div class="rb" style="left:192px;top:226px;width:199px;height:42px"></div>
<div class="rb" style="left:192.500px;top:271.500px;width:196px;height:74px"></div>
<div class="rb" style="left:454px;top:491px;width:91px;height:36.500px"></div>
<svg class="a" style="left:0;top:0;z-index:9;pointer-events:none" width="1910" height="639" viewBox="0 0 1910 639">
<defs><linearGradient id="g1" gradientUnits="userSpaceOnUse" x1="537" y1="282" x2="400" y2="305"><stop offset="0" stop-color="#ff5068" stop-opacity=".1"/><stop offset="1" stop-color="#ff5068"/></linearGradient>
<linearGradient id="g2" gradientUnits="userSpaceOnUse" x1="308" y1="334" x2="345" y2="375"><stop offset="0" stop-color="#ff5068" stop-opacity=".1"/><stop offset="1" stop-color="#ff5068"/></linearGradient></defs>
<polygon fill="url(#g1)" points="537,282 334,311.700 332.700,306.700 316.700,320 336.700,328.300 336,322.500"/>
<polygon fill="url(#g2)" points="308.300,334 437,469.500 441,466 449.300,486 430,480 434,475"/>
</svg>
</body></html>
